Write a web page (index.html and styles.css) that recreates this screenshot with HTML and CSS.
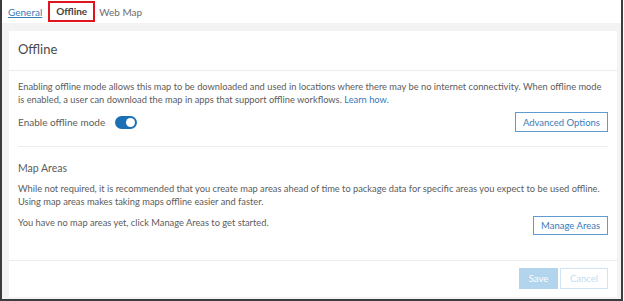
FILE: index.html
```html
<!DOCTYPE html>
<html lang="en">
<head>
    <meta charset="UTF-8">
    <title>Offline settings</title>
    <link rel="stylesheet" href="styles.css">
</head>
<body>
    <div class="frame">
        <div class="tabs">
            <a href="#" class="tab tab-link">General</a>
            <span class="tab tab-active">Offline</span>
            <span class="tab">Web Map</span>
        </div>
        <div class="content">
            <div class="card">
                <div class="card-header">Offline</div>
                <div class="card-body">
                    <p class="text">Enabling offline mode allows this map to be downloaded and used in locations where there may be no internet connectivity. When offline mode<br>is enabled, a user can download the map in apps that support offline workflows. <a href="#">Learn how.</a></p>
                    <div class="row">
                        <label class="toggle-label">Enable offline mode
                            <span class="toggle"><span class="knob"></span></span>
                        </label>
                        <button class="btn btn-outline">Advanced Options</button>
                    </div>
                    <div class="divider"></div>
                    <h4 class="section-title">Map Areas</h4>
                    <p class="text">While not required, it is recommended that you create map areas ahead of time to package data for specific areas you expect to be used offline. Using map areas makes taking maps offline easier and faster.</p>
                    <div class="row row-top">
                        <p class="text">You have no map areas yet, click Manage Areas to get started.</p>
                        <button class="btn btn-outline btn-manage">Manage Areas</button>
                    </div>
                </div>
                <div class="card-footer">
                    <button class="btn btn-save" disabled>Save</button>
                    <button class="btn btn-cancel" disabled>Cancel</button>
                </div>
            </div>
        </div>
    </div>
</body>
</html>
```

FILE: styles.css
```css
body {
    margin: 0;
    font-family: Lato, "Open Sans", sans-serif;
    background: white;
    color: #5c5c5c;
}
.frame {
    width: 619px;
    height: 299px;
    border-left: 2px solid #3c3c3c;
    border-right: 2px solid #3c3c3c;
    border-bottom: 2px solid #3c3c3c;
    display: flex;
    flex-direction: column;
}
.tabs {
    height: 23px;
    display: flex;
    align-items: center;
    padding-left: 4px;
    font-size: 10px;
}
.tab {
    color: #6e6e6e;
    padding: 0 2px;
}
.tab-link {
    color: #3a7cb8;
    text-decoration: underline;
    margin-right: 4px;
}
.tab-active {
    font-weight: bold;
    color: #444;
    border: 2px solid #e0141e;
    height: 17px;
    line-height: 17px;
    padding: 0 6px;
    margin-right: 2px;
}
.content {
    flex: 1;
    background: #f3f3f3;
    padding: 8px 4px 2px 7px;
    display: flex;
}
.card {
    flex: 1;
    background: white;
    display: flex;
    flex-direction: column;
}
.card-header {
    height: 39px;
    line-height: 36px;
    padding-left: 9px;
    font-size: 13px;
    color: #4a4a4a;
    border-bottom: 1px solid #ececec;
}
.card-body {
    flex: 1;
    padding: 9px 9px 0 9px;
}
.text {
    margin: 0;
    font-size: 9.3px;
    line-height: 13px;
}
.text a {
    color: #2f7bbf;
    text-decoration: none;
}
.row {
    display: flex;
    justify-content: space-between;
    align-items: center;
    margin-top: 6px;
}
.row-top {
    align-items: flex-start;
    margin-top: 8px;
}
.toggle-label {
    display: flex;
    align-items: center;
    font-size: 10px;
    color: #5c5c5c;
}
.toggle {
    display: inline-block;
    width: 22px;
    height: 13px;
    margin-left: 10px;
    border-radius: 7px;
    background: #1b6fb5;
    position: relative;
}
.knob {
    position: absolute;
    right: 2px;
    top: 2px;
    width: 9px;
    height: 9px;
    border-radius: 50%;
    background: white;
}
.btn {
    font-family: inherit;
    font-size: 9.5px;
    height: 20px;
    padding: 0 7px;
    border-radius: 0;
    cursor: pointer;
}
.btn-outline {
    background: white;
    color: #3a7cb8;
    border: 1px solid #5d9bd0;
}
.btn-manage {
    height: 19px;
}
.divider {
    height: 1px;
    background: #ececec;
    margin: 14px 0 15px 0;
}
.section-title {
    margin: 0 0 7px 0;
    font-size: 10.5px;
    font-weight: normal;
    line-height: 13px;
    color: #5c5c5c;
}
.card-footer {
    border-top: 1px solid #ececec;
    display: flex;
    justify-content: flex-end;
    gap: 2px;
    padding: 7px 9px 8px 0;
}
.btn-save {
    width: 39px;
    height: 21px;
    background: #b2d4ec;
    border: 1px solid #b2d4ec;
    color: white;
}
.btn-cancel {
    width: 48px;
    height: 21px;
    background: white;
    border: 1px solid #cfe3f3;
    color: #c4dcef;
}
```
